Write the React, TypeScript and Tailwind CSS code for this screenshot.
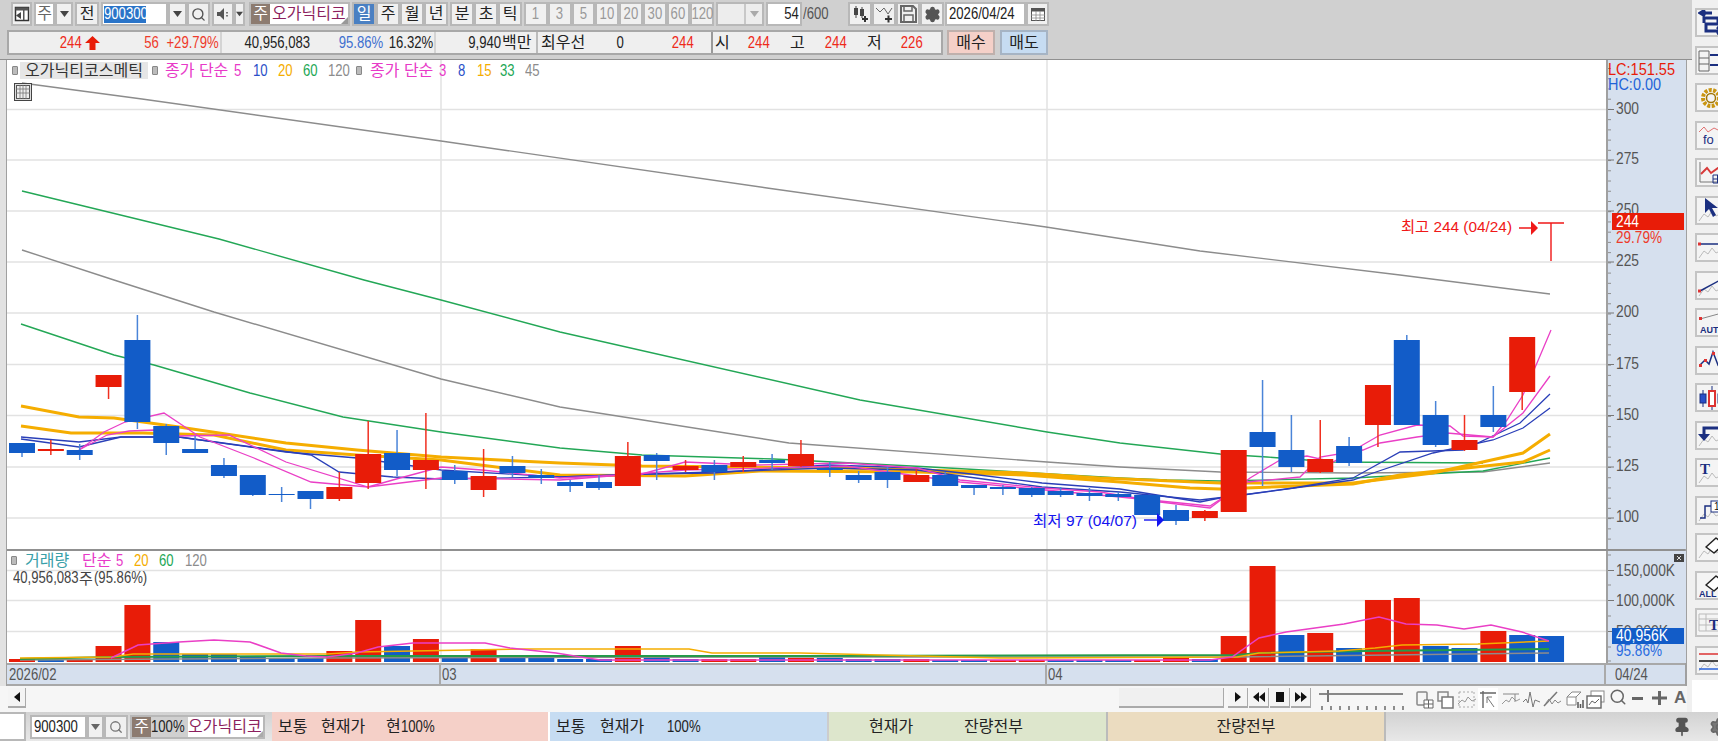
import type { ReactNode } from "react";
import { Search, Settings, Pin } from "lucide-react";

const RED = "#e81c08";
const BLUE = "#125cc8";

// [isRed, bodyTop, bodyBottom, wickTop, wickBottom]
const candles: [number, number, number, number, number][] = [
  [0, 443, 453, 443, 457], [1, 449, 451, 440, 455], [0, 450, 455, 444, 460], [1, 375, 387, 375, 399],
  [0, 340, 422, 315, 429], [0, 426, 443, 424, 455], [0, 449, 453, 436, 453], [0, 465, 476, 458, 478],
  [0, 475, 495, 475, 496], [0, 494, 495, 487, 502], [0, 491, 499, 491, 509], [1, 487, 499, 472, 501],
  [1, 454, 483, 421, 489], [0, 453, 470, 430, 476], [1, 460, 470, 413, 489], [0, 471, 480, 465, 484],
  [1, 476, 490, 449, 497], [0, 466, 473, 456, 477], [0, 475, 478, 469, 484], [0, 482, 486, 480, 492],
  [0, 482, 488, 475, 490], [1, 456, 486, 442, 486], [0, 455, 461, 453, 480], [1, 466, 470, 460, 472],
  [0, 465, 472, 460, 480], [1, 462, 467, 456, 472], [0, 460, 463, 454, 470], [1, 454, 466, 440, 467],
  [0, 468, 470, 462, 477], [0, 475, 480, 471, 483], [0, 472, 480, 467, 488], [1, 475, 482, 469, 482],
  [0, 475, 486, 472, 486], [0, 485, 488, 485, 495], [0, 487, 489, 485, 495], [0, 488, 495, 487, 497],
  [0, 491, 495, 487, 497], [0, 493, 496, 488, 501], [0, 494, 497, 492, 501], [0, 495, 515, 495, 515],
  [0, 510, 521, 505, 525], [1, 511, 518, 510, 521], [1, 450, 512, 450, 512], [0, 432, 447, 380, 486],
  [0, 450, 467, 415, 472], [1, 459, 472, 420, 473], [0, 446, 463, 437, 466], [1, 385, 425, 385, 447],
  [0, 340, 425, 335, 425], [0, 415, 445, 401, 447], [1, 440, 450, 415, 451], [0, 415, 427, 386, 432],
  [1, 337, 392, 337, 410],
];

// [isRed, top]
const volumes: [number, number][] = [
  [1, 659], [0, 660], [1, 660], [1, 646], [1, 605], [0, 642], [0, 654], [0, 654], [0, 657], [0, 658],
  [0, 658], [1, 651], [1, 620], [0, 646], [1, 639], [0, 657], [1, 649], [0, 657], [0, 657], [0, 659],
  [0, 659], [1, 646], [0, 657], [0, 659], [1, 659], [1, 659], [0, 657], [1, 658], [0, 658], [0, 659],
  [0, 659], [1, 659], [0, 660], [0, 660], [1, 660], [1, 660], [0, 660], [0, 660], [0, 660], [1, 660],
  [1, 657], [0, 659], [1, 636], [1, 566], [0, 635], [1, 633], [0, 648], [1, 600], [1, 598], [0, 646],
  [0, 648], [1, 631], [0, 635], [0, 636],
];

const pts = (list: number[][]) => list.map((p) => p.join(",")).join(" ");

const priceLines: { c: string; w: number; p: number[][] }[] = [
  { c: "#8c8c8c", w: 1.4, p: [[22, 83], [142, 99], [441, 141], [767, 188], [1046, 227], [1200, 251], [1400, 275], [1550, 294]] },
  { c: "#23a756", w: 1.4, p: [[22, 191], [219, 239], [364, 280], [441, 300], [560, 332], [860, 400], [1047, 432], [1120, 443], [1220, 454], [1267, 457], [1333, 462], [1483, 463]] },
  { c: "#8c8c8c", w: 1.4, p: [[22, 250], [114, 280], [214, 312], [441, 379], [560, 407], [789, 443], [1047, 462], [1120, 467], [1220, 472], [1353, 473], [1483, 472], [1550, 463]] },
  { c: "#23a756", w: 1.4, p: [[21, 324], [114, 355], [154, 365], [250, 393], [343, 417], [441, 432], [560, 448], [642, 455], [774, 459], [931, 467], [1120, 478], [1167, 480], [1220, 481], [1353, 478], [1483, 471], [1550, 458]] },
  { c: "#f5ad00", w: 3, p: [[21, 406], [79, 417], [114, 418], [179, 427], [286, 443], [357, 450], [441, 457], [560, 463], [642, 466], [846, 468], [1024, 473], [1100, 478], [1220, 483], [1353, 483], [1433, 473], [1523, 453], [1550, 434]] },
  { c: "#f5ad00", w: 3, p: [[21, 426], [71, 433], [143, 433], [214, 435], [286, 450], [357, 455], [441, 460], [560, 475], [685, 476], [760, 471], [917, 472], [1024, 475], [1120, 482], [1190, 488], [1220, 489], [1353, 484], [1400, 475], [1523, 462], [1550, 450]] },
  { c: "#2a3fb8", w: 1.3, p: [[21, 437], [79, 442], [121, 437], [179, 437], [311, 455], [339, 472], [393, 477], [441, 479], [560, 477], [642, 474], [713, 473], [828, 465], [917, 468], [971, 474], [1042, 483], [1120, 489], [1200, 502], [1220, 498], [1293, 488], [1353, 478], [1400, 452], [1463, 450], [1520, 423], [1550, 394]] },
  { c: "#2a3fb8", w: 1.3, p: [[21, 439], [79, 447], [121, 437], [179, 437], [286, 452], [357, 458], [441, 470], [560, 477], [713, 472], [828, 468], [917, 470], [1042, 487], [1120, 492], [1200, 500], [1243, 495], [1353, 480], [1373, 473], [1433, 453], [1493, 440], [1523, 428], [1550, 408]] },
  { c: "#ea3fc6", w: 1.3, p: [[79, 450], [104, 432], [125, 422], [164, 413], [200, 437], [254, 458], [311, 482], [368, 487], [400, 478], [441, 467], [482, 470], [560, 478], [642, 474], [685, 462], [753, 465], [846, 463], [917, 468], [960, 480], [1042, 488], [1100, 492], [1160, 502], [1210, 508], [1250, 478], [1280, 460], [1307, 456], [1333, 462], [1380, 435], [1417, 425], [1450, 426], [1463, 436], [1493, 437], [1523, 413], [1550, 376]] },
  { c: "#ea3fc6", w: 1.3, p: [[79, 450], [107, 435], [129, 431], [154, 430], [179, 436], [229, 435], [286, 462], [368, 487], [441, 478], [560, 480], [685, 470], [846, 466], [960, 482], [1120, 497], [1210, 506], [1247, 482], [1300, 477], [1320, 457], [1363, 450], [1380, 443], [1417, 437], [1447, 433], [1493, 437], [1507, 420], [1523, 395], [1537, 363], [1551, 330]] },
];

const volLines: { c: string; w: number; p: number[][] }[] = [
  { c: "#8c8c8c", w: 1.5, p: [[20, 660], [327, 658], [800, 657], [1237, 657], [1549, 653]] },
  { c: "#249a4a", w: 2, p: [[20, 659], [112, 657], [327, 656], [800, 656], [1237, 655], [1259, 653], [1366, 651], [1549, 649]] },
  { c: "#f5ad00", w: 1.5, p: [[20, 658], [112, 657], [133, 654], [327, 654], [357, 652], [525, 649], [689, 649], [712, 653], [800, 653], [1000, 658], [1237, 657], [1259, 653], [1339, 651], [1375, 648], [1402, 645], [1478, 644], [1549, 641]] },
  { c: "#ea3fc6", w: 1.5, p: [[111, 658], [138, 645], [179, 642], [214, 640], [250, 642], [281, 653], [306, 656], [327, 657], [357, 653], [378, 647], [413, 643], [485, 643], [510, 648], [556, 653], [600, 660], [1210, 660], [1232, 657], [1259, 638], [1286, 632], [1344, 624], [1379, 617], [1406, 624], [1437, 625], [1464, 629], [1491, 625], [1522, 632], [1549, 641]] },
];

function PriceChart() {
  return (
    <svg className="block h-[489px] w-[1599px]" viewBox="7 60 1599 489">
      {[109.5, 160, 211, 262, 313, 364.5, 415.5, 467, 518].map((y) => (
        <line key={y} x1="7" x2="1606" y1={y} y2={y} stroke="#e2e2e2" strokeWidth="1.5" />
      ))}
      {[441, 1047].map((x) => (
        <line key={x} x1={x} x2={x} y1="60" y2="549" stroke="#e2e2e2" strokeWidth="1.5" />
      ))}
      {priceLines.map((l, i) => (
        <polyline key={i} points={pts(l.p)} fill="none" stroke={l.c} strokeWidth={l.w} />
      ))}
      {candles.map(([up, top, bottom, wt, wb], i) => {
        const x = 22 + 28.85 * i;
        const c = up ? RED : BLUE;
        return (
          <g key={i}>
            <line x1={x} x2={x} y1={wt} y2={wb} stroke={up ? "#f03020" : "#4a84d8"} strokeWidth="1.5" />
            <rect x={x - 13} y={top} width="26" height={bottom - top} fill={c} />
          </g>
        );
      })}
      <g stroke="#f01818" strokeWidth="1.4" fill="none">
        <path d="M1538 223H1564M1551 223V261M1519 228H1532" />
      </g>
      <path d="M1531 221L1538 228L1531 235Z" fill="#f01818" />
      <text x="1401" y="232" fontSize="15" fill="#f01818" textLength="111" lengthAdjust="spacingAndGlyphs">최고 244 (04/24)</text>
      <text x="1033" y="526" fontSize="15" fill="#1414f0" textLength="104" lengthAdjust="spacingAndGlyphs">최저 97 (04/07)</text>
      <path d="M1144 520H1158" stroke="#1414f0" strokeWidth="1.4" />
      <path d="M1157 513L1164 520L1157 527Z" fill="#1414f0" />
    </svg>
  );
}

function VolumeChart() {
  return (
    <svg className="block h-[112px] w-[1599px]" viewBox="7 551 1599 112">
      {[570.5, 600.5, 631.5].map((y) => (
        <line key={y} x1="7" x2="1606" y1={y} y2={y} stroke="#e2e2e2" strokeWidth="1.5" />
      ))}
      {[441, 1047].map((x) => (
        <line key={x} x1={x} x2={x} y1="551" y2="663" stroke="#e2e2e2" strokeWidth="1.5" />
      ))}
      {volumes.map(([up, top], i) => (
        <rect key={i} x={22 + 28.85 * i - 13} y={top} width="26" height={662 - top} fill={up ? RED : BLUE} />
      ))}
      {volLines.map((l, i) => (
        <polyline key={i} points={pts(l.p)} fill="none" stroke={l.c} strokeWidth={l.w} />
      ))}
    </svg>
  );
}

function PriceAxis() {
  const ticks = [];
  for (let y = 109.5 - 41; y < 549; y += 10.23) ticks.push(y);
  const labels: [string, number][] = [["300", 109.5], ["275", 160], ["250", 211], ["225", 262], ["200", 313], ["175", 364.5], ["150", 415.5], ["125", 467], ["100", 518]];
  return (
    <svg className="block h-[489px] w-[78px]" viewBox="1608 60 78 489">
      {ticks.map((y, i) => (
        <line key={i} x1="1606" x2="1611" y1={y} y2={y} stroke="#8f8f8f" />
      ))}
      {labels.map(([t, y]) => (
        <g key={t}>
          <line x1="1606" x2="1614" y1={y} y2={y} stroke="#777" />
          <text x="1616" y={y + 4} fontSize="16" fill="#555" textLength="23" lengthAdjust="spacingAndGlyphs">{t}</text>
        </g>
      ))}
      <text x="1608" y="75" fontSize="16" fill="#e81c08" textLength="67" lengthAdjust="spacingAndGlyphs">LC:151.55</text>
      <text x="1608" y="90" fontSize="16" fill="#1f63d8" textLength="53" lengthAdjust="spacingAndGlyphs">HC:0.00</text>
      <rect x="1612" y="213" width="72" height="17" fill={RED} />
      <text x="1616" y="227" fontSize="16" fill="#fff" textLength="23" lengthAdjust="spacingAndGlyphs">244</text>
      <text x="1616" y="243" fontSize="16" fill="#ee3a2a" textLength="46" lengthAdjust="spacingAndGlyphs">29.79%</text>
    </svg>
  );
}

function VolumeAxis() {
  const labels: [string, number][] = [["150,000K", 570.5], ["100,000K", 600.5], ["50,000K", 631.5]];
  return (
    <svg className="block h-[112px] w-[78px]" viewBox="1608 551 78 112">
      {[555, 585, 616, 647, 661].map((y) => (
        <line key={y} x1="1606" x2="1611" y1={y} y2={y} stroke="#8f8f8f" />
      ))}
      {labels.map(([t, y]) => (
        <g key={t}>
          <line x1="1606" x2="1614" y1={y} y2={y} stroke="#777" />
          <text x="1616" y={y + 5} fontSize="16" fill="#555" textLength={t.length === 8 ? 59 : 52} lengthAdjust="spacingAndGlyphs">{t}</text>
        </g>
      ))}
      <rect x="1612" y="628" width="72" height="16" fill={BLUE} />
      <text x="1616" y="641" fontSize="16" fill="#fff" textLength="52" lengthAdjust="spacingAndGlyphs">40,956K</text>
      <text x="1616" y="656" fontSize="16" fill="#2a6ce0" textLength="46" lengthAdjust="spacingAndGlyphs">95.86%</text>
      <rect x="1674" y="554" width="10" height="8" fill="#444" />
      <path d="M1677 556L1681 560M1681 556L1677 560" stroke="#ddd" strokeWidth="1" />
    </svg>
  );
}

// narrow digits, the source terminal uses a tall condensed bitmap face
function Num({ w, c = "text-[#222]", left, mid, children }: { w: string; c?: string; left?: boolean; mid?: boolean; children: ReactNode }) {
  const box = mid ? "justify-center" : left ? "justify-start" : "justify-end";
  const origin = mid ? "origin-center" : left ? "origin-left" : "origin-right";
  return (
    <span className={`flex shrink-0 whitespace-nowrap ${box} ${w} ${c}`}>
      <span className={`inline-block text-[16px] leading-none scale-x-[0.82] ${origin}`}>{children}</span>
    </span>
  );
}

function Btn({ w, bg = "bg-[#f0f0f0]", className = "", children }: { w: string; bg?: string; className?: string; children?: ReactNode }) {
  return (
    <div className={`flex h-[24px] shrink-0 items-center justify-center border-2 border-[#b8b8b8] ${bg} ${w} ${className}`}>
      {children}
    </div>
  );
}

const Caret = ({ c = "#444" }: { c?: string }) => (
  <svg width="9" height="6" viewBox="0 0 9 6"><path d="M0 0H9L4.5 6Z" fill={c} /></svg>
);

function TopBar() {
  return (
    <div className="h-[60px] shrink-0 border-b border-[#909090] bg-[#d0d0d0]">
      <div className="flex pl-[11px] pt-[2px] text-[16px] text-[#222]">
        <Btn w="w-[21px]">
          <svg width="16" height="16" viewBox="0 0 16 16"><rect x="1.5" y="1.5" width="13" height="13" fill="#fff" stroke="#333" strokeWidth="1.5" /><rect x="1.5" y="1.5" width="13" height="3" fill="#555" /><rect x="9" y="4" width="1.5" height="10" fill="#555" /><path d="M7 6V13L2 9.5Z" fill="#444" /></svg>
        </Btn>
        <Btn w="w-[21px] ml-[2px]" bg="bg-white" className="text-[#666]">주</Btn>
        <Btn w="w-[18px]"><Caret /></Btn>
        <Btn w="w-[24px] ml-[2px]">전</Btn>
        <div className="ml-[2px] flex h-[24px] w-[67px] shrink-0 items-center border-2 border-[#b8b8b8] bg-white pl-[1px]">
          <span className="flex h-[17px] items-center bg-[#2a74c8] text-white">
            <Num w="w-[42px]" c="text-white" left>900300</Num>
          </span>
        </div>
        <Btn w="w-[19px]"><Caret /></Btn>
        <Btn w="w-[23px]"><Search size={15} color="#555" strokeWidth={2.2} /></Btn>
        <Btn w="w-[22px] ml-[2px]">
          <svg width="14" height="14" viewBox="0 0 14 14"><path d="M1 5H4L8 1V13L4 9H1Z" fill="#555" /><path d="M10 5h2v1.6h-2zM10 8h2v1.6h-2z" fill="#777" /></svg>
        </Btn>
        <Btn w="w-[11px]"><Caret /></Btn>
        <div className="relative ml-[4px] flex h-[24px] w-[101px] shrink-0 items-center border-2 border-[#b8b8b8] bg-white">
          <span className="flex h-[20px] w-[19px] items-center justify-center bg-[#8c7b70] text-white">주</span>
          <span className="ml-[2px] overflow-hidden whitespace-nowrap text-[#8c1f5e]">오가닉티코</span>
          <span className="absolute bottom-0 right-0 h-0 w-0 border-b-[7px] border-l-[7px] border-b-[#999] border-l-transparent" />
        </div>
        <Btn w="w-[24px] ml-[2px]" bg="bg-[#4a80c2]" className="text-white">일</Btn>
        {["주", "월", "년"].map((t) => <Btn key={t} w="w-[24px]">{t}</Btn>)}
        {["분", "초", "틱"].map((t, i) => <Btn key={t} w={i === 0 ? "w-[24px] ml-[2px]" : "w-[24px]"}>{t}</Btn>)}
        {["1", "3", "5", "10", "20", "30", "60", "120"].map((t, i) => (
          <Btn key={t} w={i === 0 ? "w-[23.75px] ml-[2px]" : "w-[23.75px]"}>
            <Num w="w-full" c="text-[#999]" mid>{t}</Num>
          </Btn>
        ))}
        <div className="ml-[2px] flex h-[24px] w-[48px] shrink-0 border-2 border-[#b8b8b8] bg-[#ededed]">
          <div className="flex-1" />
          <div className="flex w-[18px] items-center justify-center border-l-2 border-[#c8c8c8]"><Caret c="#aaa" /></div>
        </div>
        <div className="ml-[2px] flex h-[24px] w-[36px] shrink-0 items-center justify-end border-2 border-[#b8b8b8] bg-white pr-[1px]">
          <Num w="w-[18px]">54</Num>
        </div>
        <Num w="w-[31px] self-center ml-[1px]" c="text-[#555]" left>/600</Num>
        <div className="ml-[14px] flex">
          <Btn w="w-[24px]">
            <svg width="18" height="18" viewBox="0 0 18 18"><path d="M3 3h4v7H3zM9 4h4v7H9z" fill="#444" /><path d="M5 1v12M11 2v11" stroke="#444" /><path d="M11 14h6M14 11v6" stroke="#333" strokeWidth="2" /></svg>
          </Btn>
          <Btn w="w-[24px]">
            <svg width="18" height="18" viewBox="0 0 18 18"><path d="M1 3l4 4 4-4 4 6 4-6" fill="none" stroke="#666" /><path d="M10 14h7M13.5 10.5v7" stroke="#333" strokeWidth="2" /></svg>
          </Btn>
          <Btn w="w-[24px]">
            <svg width="17" height="18" viewBox="0 0 17 18"><path d="M1 1h12l3 3v13H1z" fill="none" stroke="#666" strokeWidth="2" /><path d="M4 1h8v5H4zM4 10h9v7H4z" fill="none" stroke="#666" strokeWidth="1.5" /></svg>
          </Btn>
          <Btn w="w-[24px]"><Settings size={17} color="#555" fill="#555" strokeWidth={2} /></Btn>
        </div>
        <div className="ml-[1px] flex h-[24px] w-[81px] shrink-0 items-center border-2 border-[#b8b8b8] bg-white pl-[2px]">
          <Num w="w-[75px]" left>2026/04/24</Num>
        </div>
        <Btn w="w-[23px]">
          <svg width="14" height="13" viewBox="0 0 14 13"><rect x="0.5" y="0.5" width="13" height="12" fill="#fff" stroke="#555" /><rect x="0.5" y="0.5" width="13" height="3" fill="#555" /><path d="M0 7h14M0 10h14M5 3v10M9 3v10" stroke="#888" strokeWidth="0.8" /></svg>
        </Btn>
      </div>

      <div className="flex pl-[7px] pt-[4px]">
        <div className="flex h-[25px] w-[936px] items-center border-2 border-[#a8a8a8] bg-[#efefef] text-[16px] text-[#222]">
          <div className="flex h-full w-[213px] items-center border-r-2 border-[#d4d4d4]">
            <Num w="w-[73px]" c="text-[#ee2a1a]">244</Num>
            <svg className="ml-[3px] shrink-0" width="15" height="14" viewBox="0 0 15 14"><path d="M7.5 0L15 7H10.5V14H4.5V7H0Z" fill="#e81c08" /></svg>
            <Num w="w-[59px]" c="text-[#ee3a2a]">56</Num>
            <Num w="w-[60px]" c="text-[#ee3a2a]">+29.79%</Num>
          </div>
          <div className="flex h-full w-[214px] items-center border-r-2 border-[#d4d4d4]">
            <Num w="w-[88px]">40,956,083</Num>
            <Num w="w-[73px]" c="text-[#3f6fd0]">95.86%</Num>
            <Num w="w-[50px]">16.32%</Num>
          </div>
          <div className="flex h-full w-[102px] items-center border-r-2 border-[#bbb]">
            <Num w="w-[65px]">9,940</Num>
            <span className="ml-[1px] whitespace-nowrap">백만</span>
          </div>
          <div className="flex h-full w-[175px] items-center border-r-2 border-[#999]">
            <span className="ml-[3px] w-[44px] shrink-0 whitespace-nowrap">최우선</span>
            <Num w="w-[39px]">0</Num>
            <Num w="w-[70px]" c="text-[#ee2a1a]">244</Num>
          </div>
          <span className="ml-[2px] w-[11px] shrink-0">시</span>
          <Num w="w-[44px]" c="text-[#ee2a1a]">244</Num>
          <span className="ml-[20px] w-[14px] shrink-0">고</span>
          <Num w="w-[43px]" c="text-[#ee2a1a]">244</Num>
          <span className="ml-[20px] w-[13px] shrink-0">저</span>
          <Num w="w-[43px]" c="text-[#ee2a1a]">226</Num>
        </div>
        <div className="ml-[4px] flex h-[25px] w-[48px] items-center justify-center border-2 border-[#bfb0ac] bg-[#f5d0c8] text-[16px] text-[#222]">매수</div>
        <div className="ml-[5px] flex h-[25px] w-[48px] items-center justify-center border-2 border-[#a6b4c4] bg-[#c6dcf2] text-[16px] text-[#222]">매도</div>
      </div>
    </div>
  );
}

const Dot = () => <span className="block h-[9px] w-[6px] shrink-0 rounded-[1px] border border-[#888] bg-[#bbb]" />;

function Legends() {
  return (
    <>
      <div className="absolute left-[5px] top-[2px] flex h-[17px] items-center text-[16px]">
        <Dot />
        <span className="ml-[2px] flex h-[17px] w-[128px] items-center justify-center whitespace-nowrap bg-[#e6e6e6] text-[#333]">오가닉티코스메틱</span>
        <span className="ml-[4px]"><Dot /></span>
        <span className="ml-[7px] w-[69px] shrink-0 whitespace-nowrap text-[#e83ac8]">종가 단순</span>
        <Num w="w-[19px]" c="text-[#e83ac8]" left>5</Num>
        <Num w="w-[25px]" c="text-[#2a4fc8]" left>10</Num>
        <Num w="w-[25px]" c="text-[#f5ad00]" left>20</Num>
        <Num w="w-[25px]" c="text-[#23a756]" left>60</Num>
        <Num w="w-[28px]" c="text-[#8c8c8c]" left>120</Num>
        <Dot />
        <span className="ml-[8px] w-[69px] shrink-0 whitespace-nowrap text-[#e83ac8]">종가 단순</span>
        <Num w="w-[19px]" c="text-[#e83ac8]" left>3</Num>
        <Num w="w-[19px]" c="text-[#2a4fc8]" left>8</Num>
        <Num w="w-[23px]" c="text-[#f5ad00]" left>15</Num>
        <Num w="w-[25px]" c="text-[#23a756]" left>33</Num>
        <Num w="w-[20px]" c="text-[#8c8c8c]" left>45</Num>
      </div>
      <div className="absolute left-[7px] top-[23px] flex h-[18px] w-[18px] items-center justify-center border border-[#444] bg-[#ddd]">
        <svg width="14" height="14" viewBox="0 0 14 14"><rect x="0.5" y="0.5" width="13" height="13" fill="#eee" stroke="#555" /><path d="M0 4h14M0 8h14M4 0v14M7 0v14M10 0v14" stroke="#777" strokeWidth="0.8" /></svg>
      </div>
    </>
  );
}

const railBack = <path d="M1 23L6 16L10 19L14 13L18 18L24 15" fill="none" stroke="#bbb" />;
const NAVY = "#1b2f80";

const railIcons: ReactNode[] = [
  <path key="a" d="M14 3H3M7 0L2 3L7 6M6 13V8H20V14H8V21H24M19 17L24 21L19 24" fill="none" stroke={NAVY} strokeWidth="3" />,
  <g key="b" fill="none" stroke="#666"><path d="M1 3h10v20H1zM1 10h10M1 16h10" /><path d="M12 7h10M12 17h10" stroke={NAVY} strokeWidth="2" /></g>,
  <g key="c"><circle cx="13" cy="13" r="8" fill="none" stroke="#c99511" strokeWidth="4" strokeDasharray="3 1.4" /><circle cx="13" cy="13" r="4.5" fill="none" stroke="#a17607" strokeWidth="1.5" /></g>,
  <g key="d"><path d="M1 9L6 4L10 9L16 5L24 9" fill="none" stroke="#e07070" /><text x="5" y="21" fontSize="13" fill={NAVY}>fo</text></g>,
  <g key="e"><path d="M2 2V22H24" fill="none" stroke="#777" /><path d="M3 14L9 8L13 13L24 5" fill="none" stroke="#d83a3a" strokeWidth="2" /><path d="M15 15h9v8h-9zM19.5 15v8M15 19h9" fill="none" stroke={NAVY} /></g>,
  <g key="f">{railBack}<path d="M7 0V15L11 11L15 19L18 17L14 10H20Z" fill={NAVY} /></g>,
  <g key="g">{railBack}<path d="M2 9H26" stroke={NAVY} strokeWidth="1.5" /><rect x="0" y="7.5" width="3" height="3" fill="#d33" /></g>,
  <g key="h">{railBack}<path d="M2 18L26 5" stroke={NAVY} strokeWidth="1.5" /><rect x="0" y="16.5" width="3" height="3" fill="#d33" /></g>,
  <g key="i"><path d="M2 9L24 3" stroke="#888" /><rect x="1" y="7" width="3" height="3" fill="#d33" /><text x="2" y="23" fontSize="9" fontWeight="700" fill={NAVY}>AUTO</text></g>,
  <g key="j"><path d="M2 17L7 12L11 16L15 4L20 17L25 13" fill="none" stroke={NAVY} strokeWidth="1.5" /><g fill="#d33"><rect x="6" y="11" width="3" height="3" /><rect x="14" y="4" width="3" height="3" /><rect x="1" y="16" width="3" height="3" /></g></g>,
  <g key="k"><path d="M5 5V22M14 1V25M23 5V22" stroke={NAVY} /><rect x="2" y="9" width="6" height="9" fill="#2a4fc8" stroke={NAVY} /><rect x="11" y="6" width="6" height="15" fill="#fff" stroke="#d33" strokeWidth="2" /><rect x="20" y="9" width="6" height="9" fill="#2a4fc8" stroke={NAVY} /></g>,
  <g key="l">{railBack}<path d="M6 12V5H26" fill="none" stroke={NAVY} strokeWidth="3" /><path d="M0 11H12L6 18Z" fill={NAVY} /></g>,
  <g key="m">{railBack}<text x="2" y="14" fontSize="15" fontWeight="700" fontFamily="Liberation Serif" fill={NAVY}>T</text></g>,
  <g key="n">{railBack}<path d="M2 20H7V8H14" fill="none" stroke={NAVY} strokeWidth="1.5" /><rect x="13" y="3" width="11" height="11" fill="#fff" stroke={NAVY} /><text x="16" y="12" fontSize="10" fill="#111">1</text></g>,
  <g key="o">{railBack}<path d="M8 12L18 3L26 9L16 18Z" fill="#fff" stroke="#222" strokeWidth="1.5" strokeLinejoin="round" /></g>,
  <g key="p"><path d="M8 12L18 3L26 9L16 18Z" fill="#fff" stroke="#222" strokeWidth="1.5" strokeLinejoin="round" /><text x="1" y="24" fontSize="9" fontWeight="700" fill={NAVY}>ALL</text></g>,
  <g key="q"><path d="M1 4h22v17H1zM1 9h22M1 15h22M8 4v17" fill="none" stroke="#bbb" /><text x="11" y="20" fontSize="15" fontWeight="700" fontFamily="Liberation Serif" fill={NAVY}>T</text></g>,
  <g key="r">{railBack}<path d="M1 6H26" stroke="#d33" strokeWidth="1.5" /><path d="M1 13H26" stroke="#111" strokeWidth="1.5" /><path d="M1 21H26" stroke="#2a63d8" strokeWidth="1.5" /></g>,
];

function Rail() {
  return (
    <div className="flex w-[26px] shrink-0 flex-col">
      <div className="flex h-[680px] flex-col gap-[8.5px] bg-[#f0f0f0] pl-[3px] pt-[8px]">
        {railIcons.map((icon, i) => (
          <div key={i} className="flex h-[29px] w-[30px] shrink-0 items-center border-2 border-[#c4c4c4] bg-[#f4f4f4] pl-[1px]">
            <svg className="shrink-0" width="26" height="25" viewBox="0 0 26 25">{icon}</svg>
          </div>
        ))}
      </div>
      <div className="flex-1 bg-white" />
    </div>
  );
}

const Wave = () => <path d="M1 14L5 10L8 12L11 7L15 11L19 9" fill="none" stroke="#999" />;

const bottomIcons: ReactNode[] = [
  <g key="1"><rect x="2" y="2" width="10" height="13" rx="1" fill="none" stroke="#888" strokeWidth="1.5" /><path d="M9 10h9v8H9zM13.5 10v8M9 14h9" fill="#fff" stroke="#666" /></g>,
  <g key="2"><rect x="2" y="2" width="10" height="9" fill="none" stroke="#888" strokeWidth="1.5" /><rect x="6" y="7" width="11" height="11" fill="#fff" stroke="#777" strokeWidth="1.5" /></g>,
  <g key="3"><path d="M2 2H17M2 17H17M2 2V17M17 2V17" fill="none" stroke="#aaa" strokeDasharray="2 2" /><Wave /></g>,
  <g key="4"><path d="M4 1V18M1 3H17" stroke="#666" strokeWidth="1.4" /><path d="M8 7L15 17M8 7V13M8 7H13" fill="none" stroke="#777" /></g>,
  <g key="5"><Wave /><path d="M2 4H18M14 4V12" fill="none" stroke="#888" /></g>,
  <g key="6"><path d="M1 12L4 9L6 13L8 2L11 17L13 10L18 12" fill="none" stroke="#777" /></g>,
  <g key="7"><path d="M1 16L14 2" stroke="#777" strokeWidth="1.5" /><path d="M3 13L6 9L9 14L12 10L15 13L18 11" fill="none" stroke="#888" /></g>,
  <g key="8"><path d="M2 7L7 2H16L11 7V15H2ZM11 7H2" fill="#fff" stroke="#888" /><path d="M13 12v6M15.5 14v4M18 10v8" stroke="#555" strokeWidth="1.5" /></g>,
  <g key="9"><rect x="5" y="1" width="13" height="11" fill="#fff" stroke="#888" /><rect x="1" y="6" width="14" height="12" fill="#fff" stroke="#666" strokeWidth="1.4" /><path d="M3 15L6 11L9 13L13 9" fill="none" stroke="#666" /></g>,
];

function ScrollRow() {
  const iconW = ["w-[19px]", "w-[19px] ml-[2px]", "w-[19px] ml-[2px]", "w-[20px] ml-[2px] bg-white", "w-[19px] ml-[3px]", "w-[19px] ml-[2px]", "w-[19px] ml-[2px]", "w-[19px] ml-[3px]", "w-[19px] ml-[2px]"];
  return (
    <div className="flex h-[26px] w-[1687px] items-start bg-[#f6f6f6] pt-[2px] pl-[8px]">
      <div className="flex h-[20px] w-[18px] shrink-0 items-center justify-center border-b-2 border-r border-[#aaa] bg-[#f4f4f4]">
        <svg width="6" height="10" viewBox="0 0 6 10"><path d="M6 0V10L0 5Z" fill="#111" /></svg>
      </div>
      <div className="ml-[1093px] h-[20px] w-[105px] shrink-0 border-b-2 border-r border-[#aaa] bg-[#f0f0f0]" />
      {[
        <path key="a" d="M4 1V11L10 6Z" />,
        <path key="b" d="M7 1V11L1 6ZM13 1V11L7 6Z" />,
        <path key="c" d="M3 1H11V11H3Z" />,
        <path key="d" d="M1 1V11L7 6ZM7 1V11L13 6Z" />,
      ].map((p, i) => (
        <div key={i} className={`flex h-[20px] w-[20px] shrink-0 items-center justify-center border-b-2 border-r border-[#aaa] bg-[#f4f4f4] ${i === 0 ? "ml-[4px]" : "ml-[1px]"}`}>
          <svg width="14" height="12" viewBox="0 0 14 12" fill="#111">{p}</svg>
        </div>
      ))}
      <svg className="ml-[8px] shrink-0" width="85" height="22" viewBox="0 0 85 22">
        <path d="M0 6H84" stroke="#888" strokeWidth="2" />
        <path d="M9 2V14" stroke="#777" strokeWidth="2" />
        <path d="M3 18V22M12 18V22M21 18V22M30 18V22M39 18V22M48 18V22M57 18V22M66 18V22M75 18V22M84 18V22" stroke="#555" strokeWidth="1.3" />
      </svg>
      <div className="ml-[11px] flex">
        {bottomIcons.map((ic, i) => (
          <div key={i} className={`flex h-[22px] items-center justify-center ${iconW[i]}`}>
            <svg width="19" height="19" viewBox="0 0 19 19">{ic}</svg>
          </div>
        ))}
      </div>
      <Search className="ml-[4px] shrink-0" size={18} color="#666" strokeWidth={2} />
      <div className="ml-[5px] mt-[9px] h-[3px] w-[11px] shrink-0 bg-[#666]" />
      <svg className="ml-[9px] mt-[2px] shrink-0" width="15" height="16" viewBox="0 0 15 16"><path d="M7.5 1V15M0 8H15" stroke="#666" strokeWidth="3" /></svg>
      <span className="ml-[7px] text-[17px] font-bold leading-[20px] text-[#666]">A</span>
    </div>
  );
}

function BottomBar() {
  return (
    <div className="flex h-[29px] shrink-0 items-stretch bg-gradient-to-b from-[#d2d2d2] to-[#e8e8e8] text-[16px] text-[#222]">
      <div className="w-[26px] shrink-0 border-2 border-l-0 border-[#b8b8b8] bg-white" />
      <div className="ml-[4px] flex h-[24px] w-[57px] shrink-0 items-center self-center border-2 border-[#b8b8b8] bg-white pl-[2px]">
        <Num w="w-[44px]" left>900300</Num>
      </div>
      <Btn w="w-[17px] self-center"><Caret c="#666" /></Btn>
      <Btn w="w-[24px] self-center"><Search size={14} color="#777" strokeWidth={2.2} /></Btn>
      <div className="relative ml-[2px] flex h-[24px] w-[135px] shrink-0 items-center self-center border-2 border-[#b8b8b8] bg-white">
        <span className="flex h-[20px] w-[19px] shrink-0 items-center justify-center bg-[#8c7b70] text-white">주</span>
        <span className="flex h-[20px] w-[37px] shrink-0 items-center bg-[#d0d0d0]"><Num w="w-[35px]" left>100%</Num></span>
        <span className="overflow-hidden whitespace-nowrap text-[#8c1f5e]">오가닉티코</span>
        <span className="absolute bottom-0 right-0 h-0 w-0 border-b-[6px] border-l-[6px] border-b-[#aaa] border-l-transparent" />
      </div>
      <div className="ml-[7px] flex w-[278px] shrink-0 items-center border-r-2 border-white bg-[#f5d0c8] pl-[6px]">
        <span className="w-[43px]">보통</span><span className="w-[65px]">현재가</span>
        <span>현</span><Num w="w-[35px]" left>100%</Num>
      </div>
      <div className="flex w-[279px] shrink-0 items-center border-r-2 border-[#ccc] bg-[#c6dcf2] pl-[6px]">
        <span className="w-[44px]">보통</span><span className="w-[67px]">현재가</span>
        <Num w="w-[35px]" left>100%</Num>
      </div>
      <div className="flex w-[279px] shrink-0 items-center border-r-2 border-[#bbb] bg-[#dde6cc] pl-[40px]">
        <span className="w-[95px]">현재가</span><span>잔량전부</span>
      </div>
      <div className="flex w-[278px] shrink-0 items-center justify-center border-r-2 border-[#bbb] bg-[#ebdcc0]">잔량전부</div>
      <Pin className="ml-[286px] shrink-0 self-center" size={20} color="#555" fill="#555" />
      <Settings className="ml-[17px] shrink-0 self-center" size={20} color="#666" fill="#777" />
    </div>
  );
}

export default function App() {
  return (
    <div className="flex h-[741px] w-[1718px] flex-col overflow-hidden bg-[#f0f0f0] font-['Liberation_Sans','Noto_Sans_CJK_KR',sans-serif]">
      <div className="flex h-[712px] shrink-0">
        <div className="flex w-[1692px] shrink-0 flex-col">
          <TopBar />
          <div className="flex h-[626px] shrink-0">
            <div className="w-[7px] shrink-0 border-r border-[#a0a0a0] bg-[#e2e2e2]" />
            <div className="w-[1680px] shrink-0 border-r-2 border-[#a0a0a0]">
              <div className="flex h-[491px] border-b-2 border-[#909090]">
                <div className="relative h-[489px] w-[1599px] shrink-0 bg-white">
                  <PriceChart />
                  <Legends />
                </div>
                <div className="h-[489px] flex-1 border-l-2 border-[#a0a0a0] bg-[#d6e0ee]">
                  <PriceAxis />
                </div>
              </div>
              <div className="flex h-[112px]">
                <div className="relative h-[112px] w-[1599px] shrink-0 overflow-hidden bg-white">
                  <VolumeChart />
                  <div className="absolute left-[4px] top-[2px] flex h-[15px] items-center text-[16px]">
                    <Dot />
                    <span className="ml-[8px] w-[57px] shrink-0 whitespace-nowrap text-[#3aa0a8]">거래량</span>
                    <span className="w-[34px] shrink-0 whitespace-nowrap text-[#e83ac8]">단순</span>
                    <Num w="w-[18px]" c="text-[#e83ac8]" left>5</Num>
                    <Num w="w-[25px]" c="text-[#f5ad00]" left>20</Num>
                    <Num w="w-[26px]" c="text-[#23a756]" left>60</Num>
                    <Num w="w-[25px]" c="text-[#8c8c8c]" left>120</Num>
                  </div>
                  <div className="absolute left-[6px] top-[19px] flex items-center text-[#444]">
                    <Num w="w-[66px]" c="text-[#444]" left>40,956,083</Num>
                    <span className="w-[15px] shrink-0 text-[15px] leading-none">주</span>
                    <Num w="w-[60px]" c="text-[#444]" left>(95.86%)</Num>
                  </div>
                </div>
                <div className="h-[112px] flex-1 border-l-2 border-[#a0a0a0] bg-[#d6e0ee]">
                  <VolumeAxis />
                </div>
              </div>
              <div className="flex h-[23px] border-y-2 border-[#a8a8a8] bg-[#d6e0ee] text-[#555]">
                <div className="flex w-[434px] shrink-0 items-center border-r-2 border-[#aaa] pl-[2px]"><Num w="w-[60px]" c="text-[#555]" left>2026/02</Num></div>
                <div className="flex w-[606px] shrink-0 items-center border-r-2 border-[#aaa] pl-[1px]"><Num w="w-[60px]" c="text-[#555]" left>03</Num></div>
                <div className="flex w-[559px] shrink-0 items-center border-r-2 border-[#aaa] pl-[1px]"><Num w="w-[60px]" c="text-[#555]" left>04</Num></div>
                <div className="flex flex-1 items-center pl-[9px]"><Num w="w-[60px]" c="text-[#555]" left>04/24</Num></div>
              </div>
            </div>
          </div>
          <ScrollRow />
        </div>
        <Rail />
      </div>
      <BottomBar />
    </div>
  );
}
